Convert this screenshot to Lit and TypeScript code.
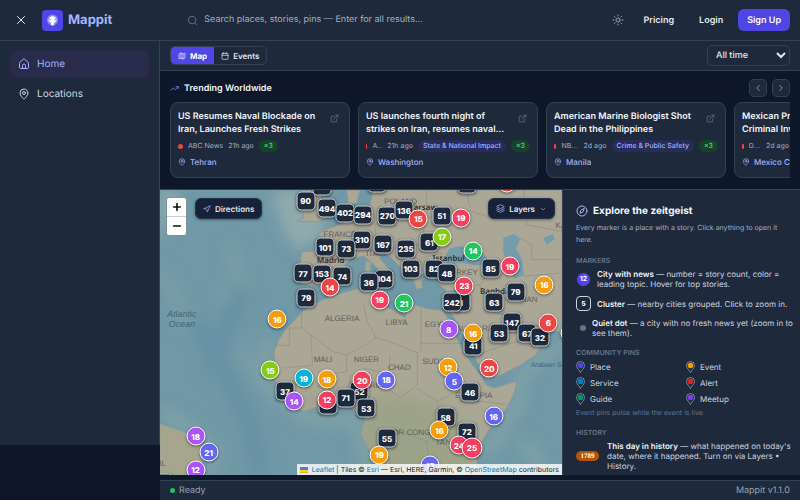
import { LitElement, html, css, svg, nothing } from "lit";
import { customElement, property } from "lit/decorators.js";

const icon = (body: unknown, size = 12, width = 2) => html`<svg
  class="icon" width=${size} height=${size} viewBox="0 0 24 24" fill="none" stroke="currentColor"
  stroke-width=${width} stroke-linecap="round" stroke-linejoin="round" aria-hidden="true">${body}</svg>`;

const paths = {
  close: svg`<path d="M19 5 5 19M5 5l14 14"/>`,
  search: svg`<circle cx="11" cy="11" r="8"/><path d="m21 21-4.3-4.3"/>`,
  sun: svg`<circle cx="12" cy="12" r="4"/><path d="M12 2v2M12 20v2M4.93 4.93l1.41 1.41M17.66 17.66l1.41 1.41M2 12h2M20 12h2M6.34 17.66l-1.41 1.41M19.07 4.93l-1.41 1.41"/>`,
  home: svg`<path d="M15 21v-6a3 3 0 0 0-6 0v6"/><path d="M3 10a2 2 0 0 1 .7-1.5l7-6a2 2 0 0 1 2.6 0l7 6A2 2 0 0 1 21 10v9a2 2 0 0 1-2 2H5a2 2 0 0 1-2-2z"/>`,
  pin: svg`<path d="M20 10c0 5-5.5 10.200-7.400 11.800a1 1 0 0 1-1.200 0C9.500 20.200 4 15 4 10a8 8 0 0 1 16 0"/><circle cx="12" cy="10" r="3"/>`,
  map: svg`<path d="M14.100 5.550a2 2 0 0 0 1.800 0l3.650-1.830A1 1 0 0 1 21 4.620v12.760a1 1 0 0 1-.55.9l-4.550 2.270a2 2 0 0 1-1.800 0l-4.200-2.100a2 2 0 0 0-1.800 0l-3.650 1.830A1 1 0 0 1 3 19.380V6.620a1 1 0 0 1 .55-.9L8.100 3.450a2 2 0 0 1 1.800 0zM15 5.760v15M9 3.240v15"/>`,
  calendar: svg`<path d="M8 2v4M16 2v4M3 10h18"/><rect x="3" y="4" width="18" height="18" rx="2"/>`,
  trend: svg`<path d="M22 7l-8.500 8.500-5-5L2 17"/><path d="M16 7h6v6"/>`,
  left: svg`<path d="m15 18-6-6 6-6"/>`,
  right: svg`<path d="m9 18 6-6-6-6"/>`,
  down: svg`<path d="m6 9 6 6 6-6"/>`,
  external: svg`<path d="M15 3h6v6M10 14 21 3M18 13v6a2 2 0 0 1-2 2H5a2 2 0 0 1-2-2V8a2 2 0 0 1 2-2h6"/>`,
  nav: svg`<path d="m3 11 19-9-9 19-2-8z"/>`,
  layers: svg`<path d="M12.800 2.200a2 2 0 0 0-1.660 0L2.600 6.080a1 1 0 0 0 0 1.830l8.580 3.910a2 2 0 0 0 1.660 0l8.580-3.900a1 1 0 0 0 0-1.830z"/><path d="M2 12a1 1 0 0 0 .6.900l8.600 3.900a2 2 0 0 0 1.650 0l8.580-3.900A1 1 0 0 0 22 12"/><path d="M2 17a1 1 0 0 0 .6.900l8.600 3.900a2 2 0 0 0 1.650 0l8.580-3.900A1 1 0 0 0 22 17"/>`,
  compass: svg`<circle cx="12" cy="12" r="10"/><path d="m16.200 7.800-1.800 5.400a2 2 0 0 1-1.300 1.300l-5.300 1.700 1.800-5.400a2 2 0 0 1 1.300-1.300z"/>`,
  plus: svg`<path d="M12 4v16M4 12h16"/>`,
  minus: svg`<path d="M4 12h16"/>`,
};

const shared = css`
  :host { font-family: Inter, "Noto Sans", sans-serif; text-rendering: geometricPrecision; }
  * { box-sizing: border-box; }
  .icon { display: block; flex: none; }
  button { font: inherit; color: inherit; border: 0; padding: 0; margin: 0; background: none; cursor: pointer; text-rendering: inherit; }
  h1, h2, h3, p, ul { margin: 0; padding: 0; }
  ul { list-style: none; }
  a { color: inherit; text-decoration: none; }
`;

type Story = { title: string; source: string; age: string; topic?: string; place: string };

const stories: Story[] = [
  { title: "US Resumes Naval Blockade on Iran, Launches Fresh Strikes", source: "ABC News", age: "21h ago", place: "Tehran" },
  { title: "US launches fourth night of strikes on Iran, resumes naval blockade of ports", source: "Al Jazeera", age: "21h ago", topic: "State & National Impact", place: "Washington" },
  { title: "American Marine Biologist Shot Dead in the Philippines", source: "NBC News", age: "2d ago", topic: "Crime & Public Safety", place: "Manila" },
  { title: "Mexican President Opens Criminal Investigation", source: "DW News", age: "2d ago", topic: "State & National Impact", place: "Mexico City" },
];

@customElement("story-card")
class StoryCard extends LitElement {
  @property({ attribute: false }) story!: Story;
  static styles = [shared, css`
    :host { display: block; }
    .card { height: 76px; padding: 7px; border: 1px solid #334155; border-radius: 8px; background: #1e293b; }
    .head { display: flex; justify-content: space-between; gap: 4px; }
    h3 { width: 142px; height: 26px; overflow: hidden; font-size: 9px; line-height: 13px; font-weight: 600; color: #f1f5f9;
      display: -webkit-box; -webkit-line-clamp: 2; -webkit-box-orient: vertical; }
    .open { height: 16px; padding: 4px 3px 0 0; color: #64748b; }
    .meta { display: flex; align-items: center; gap: 5px; height: 12px; margin-top: 4px; font-size: 7px; line-height: 12px; color: #a3b0c2; white-space: nowrap; }
    .dot { height: 5px; min-width: 1px; flex: 0 1 5px; border-radius: 3px; background: #ef4444; }
    .source { flex: 0 1 auto; min-width: 8px; overflow: hidden; text-overflow: ellipsis; }
    .topic, .count { flex: none; padding: 0 5px; border-radius: 6px; font-weight: 500; }
    .topic { color: #a5b4fc; background: #292b5b; }
    .count { color: #4ade80; background: #14432a; }
    .place { display: flex; align-items: center; gap: 4px; height: 12px; margin-top: 4px; font-size: 8px; line-height: 12px; font-weight: 500; color: #a5b4fc; }
  `];
  render() {
    const s = this.story;
    return html`<article class="card">
      <div class="head"><h3>${s.title}</h3><a class="open" href="#" aria-label="Open story">${icon(paths.external, 9)}</a></div>
      <div class="meta"><span class="dot"></span><span class="source">${s.source}</span><span>${s.age}</span>
        ${s.topic ? html`<span class="topic">${s.topic}</span>` : nothing}<span class="count">×3</span></div>
      <a class="place" href="#">${icon(paths.pin, 8)}${s.place}</a>
    </article>`;
  }
}

const C = { red: "#ef4444", rose: "#f43f5e", lime: "#84cc16", green: "#22c55e", amber: "#f59e0b", purple: "#a855f7", indigo: "#6366f1", cyan: "#06b6d4" };
type Marker = [number, number, string, string?, boolean?];

/* Ordered back to front. A colour makes a city circle; none makes a cluster. */
const markers: Marker[] = [
  [485, -5, ""], [650, -14, ""], [921, -12, ""], [1040, -14, "", C.red],
  [437, 38, "90"], [501, 61, "494"], [555, 75, "402"], [609, 81, "294"], [682, 84, "270"], [732, 66, "136"],
  [775, 92, "15", C.red], [845, 83, "51"], [903, 90, "19", C.rose], [606, 156, "310"], [669, 169, "167"],
  [495, 178, "101"], [559, 182, "73"], [738, 182, "235"], [808, 163, "61"], [846, 147, "17", C.lime],
  [940, 189, "14", C.green], [752, 242, "103"], [822, 242, "82"], [861, 256, "48"], [992, 240, "85"],
  [1050, 235, "19", C.rose], [429, 256, "77"], [486, 257, "153"], [547, 265, "74"], [672, 272, "104"],
  [626, 283, "36"], [510, 298, "14", C.red], [439, 330, "79"], [659, 335, "19", C.rose], [732, 345, "21", C.green],
  [904, 342, "1"], [876, 342, "242"], [913, 293, "23", C.rose], [1067, 311, "79"], [1003, 342, "63"],
  [1153, 291, "16", C.amber], [352, 394, "16", C.amber], [866, 424, "8", C.purple], [940, 473, "41"],
  [939, 436, "16", C.amber], [1056, 403, "147"], [1017, 436, "53"], [1101, 436, "67"], [1140, 448, "32"],
  [1165, 404, "6", C.red], [1231, 435, "", C.amber], [331, 547, "15", C.lime], [431, 571, "19", C.cyan],
  [501, 574, "18", C.amber], [598, 609, "52"], [607, 576, "20", C.rose], [679, 575, "18", C.indigo],
  [375, 609, "37"], [403, 639, "14", C.purple], [503, 650, ""], [501, 636, "12", C.rose], [557, 629, "71"],
  [619, 661, "53"], [864, 538, "12", C.amber], [883, 579, "5", C.indigo], [988, 540, "20", C.red],
  [930, 612, "46"], [1001, 684, "16", C.indigo], [857, 688, "58"], [838, 727, "16", C.amber], [921, 732, "72"],
  [897, 772, "24", C.rose], [936, 779, "25", C.rose, true], [681, 751, "55"], [658, 800, "19", C.amber],
  [810, 832, "17", C.indigo], [107, 745, "18", C.purple], [146, 793, "21", C.indigo], [107, 845, "12", C.purple], [12, 884, ""],
];

const labels: [number, number, string, string][] = [
  [65, 378, "Atlantic", "sea"], [65, 409, "Ocean", "sea"], [1170, 535, "Arabian Sea", "sea small"],
  [540, 141, "FRANCE", ""], [722, 41, "POLAND", ""], [650, 199, "ITALY", ""], [905, 254, "TURKEY", ""],
  [546, 394, "ALGERIA", ""], [710, 406, "LIBYA", ""], [835, 412, "EGYPT", ""], [955, 422, "SAUDI ARABIA", ""],
  [1104, 337, "IRAN", ""], [489, 517, "MALI", ""], [619, 517, "NIGER", ""], [718, 540, "CHAD", ""],
  [829, 523, "SUDAN", ""], [620, 594, "NIGERIA", ""], [941, 625, "ETHIOPIA", ""], [764, 736, "DR CONGO", ""],
  [885, 766, "TANZANIA", ""], [8, 827, "IL", ""], [1210, 113, "KAZ", ""],
  [512, 220, "Madrid", "city"], [866, 213, "Istanbul", "city"], [1012, 313, "Baghdad", "city"], [785, 60, "Warsaw", "city"],
];

@customElement("world-map")
class WorldMap extends LitElement {
  static styles = [shared, css`
    :host { display: block; position: relative; overflow: hidden; background: #7098a6; }
    .terrain { position: absolute; inset: 0; width: 100%; height: 100%; }
    .at { position: absolute; transform: translate(-50%, -50%); white-space: nowrap; }
    .label { font-size: 8px; line-height: 10px; color: #5f615e; font-family: "Liberation Sans", Arial, sans-serif; }
    .sea { font-style: italic; color: #3f667d; font-size: 9px; }
    .small { font-size: 7px; }
    .city { color: #2b2e33; font-family: "Noto Sans", sans-serif; font-weight: 600; }
    .marker { display: grid; place-items: center; width: 19px; height: 19px; color: #fff; font-size: 8px; font-weight: 800;
      border: 1px solid #cbd5e1; border-radius: 5px; background: #1e293b; box-shadow: 0 1px 3px #0007; }
    .marker.round { border: 1px solid #fff; border-radius: 50%; }
    .marker.big { width: 21px; height: 21px; }
    .zoom { position: absolute; left: 6px; top: 7px; display: grid; border: 1px solid #7b929c; border-radius: 3px; background: #fff; overflow: hidden; }
    .zoom button { width: 19px; height: 18px; color: #111; display: grid; place-items: center; }
    .zoom button + button { height: 19px; border-top: 1px solid #ccc; }
    .pill { position: absolute; top: 8px; display: flex; align-items: center; gap: 4px; height: 21px; padding: 0 7px;
      border-radius: 6px; background: #17223a; border: 1px solid #26344d; color: #e2e8f0; font-size: 8px; font-weight: 600; box-shadow: 0 1px 3px #0006; }
    .pill .icon { color: #a5b4fc; }
    .pill .icon:nth-of-type(2) { color: #94a3b8; }
    .directions { left: 35px; }
    .layers { right: 7px; }
    .credit { position: absolute; right: 0; bottom: 0; display: flex; align-items: center; gap: 4px; height: 11px; padding: 0 3px;
      background: #ffffffcc; color: #222; font-size: 7px; white-space: nowrap; }
    .credit a { color: #0078a8; }
  `];
  render() {
    const at = (x: number, y: number) => `left:${((x / 1206) * 100).toFixed(2)}%;top:${(((y - 6) / 855) * 100).toFixed(2)}%`;
    return html`
      <svg class="terrain" viewBox="0 6 1206 855" preserveAspectRatio="none" aria-hidden="true">
        <defs>
          <filter id="soft" x="-30%" y="-30%" width="160%" height="160%"><feGaussianBlur stdDeviation="20"/></filter>
          <clipPath id="africa"><path d="M490 335L455 352 430 368 400 400 373 430 355 458 342 492 345 520 334 545 345 582 372 620 402 652 432 670 470 658 512 652 550 646 578 662 604 680 618 692 608 718 604 742 630 788 650 820 655 861H960L948 810 962 765 1000 705 1040 660 1064 612 1070 580 1048 586 1002 600 978 590 960 560 930 520 905 480 880 430 860 385 850 367 800 362 765 350 740 365 735 388 690 362 655 345 640 302 600 300 545 315Z"/></clipPath>
        </defs>
        <rect y="6" width="1206" height="855" fill="#7098a6"/>
        <g filter="url(#soft)" fill="none">
          <path d="M60 6Q30 100 0 170V6ZM330 6L470 6 500 140 410 190 370 130Z" fill="#8faaae"/>
          <path d="M220 170Q210 230 240 270T170 330M240 480Q290 560 370 640M0 250Q60 330 70 420" stroke="#7c9fa8" stroke-width="34"/>
          <path d="M100 400Q180 520 230 620T300 861M250 300Q170 480 150 560" stroke="#6892a5" stroke-width="60"/>
          <path d="M0 670L90 720 160 790 150 861M320 450V590L430 690 590 700 630 861M980 800L1080 640 1080 570 1206 460M1090 760L1160 861" stroke="#86a5a8" stroke-width="28"/>
        </g>
        <path fill="#aaa796" stroke="#8b9b94" stroke-width="3" d="M425 192L470 188 518 196 506 152 470 140 505 122 545 108 590 82 625 70 640 6H1206V430L1150 432 1110 420 1075 405 1048 378 1036 388 1062 425 1100 447 1146 466 1128 500 1080 532 1020 562 978 574 955 530 930 474 892 405 870 370 866 355 902 340 910 303 862 312 830 282 846 258 810 246 782 262 788 300 770 304 758 270 722 240 690 205 664 192 660 212 700 258 682 276 640 228 612 204 572 212 545 240 525 280 470 294 425 288 420 240ZM410 100L432 90 425 50 440 6H480L500 90 470 102ZM560 6L600 6 590 45 565 50Z"/>
        <path fill="#aaa796" stroke="#8b9b94" stroke-width="3" d="M490 335L455 352 430 368 400 400 373 430 355 458 342 492 345 520 334 545 345 582 372 620 402 652 432 670 470 658 512 652 550 646 578 662 604 680 618 692 608 718 604 742 630 788 650 820 655 861H960L948 810 962 765 1000 705 1040 660 1064 612 1070 580 1048 586 1002 600 978 590 960 560 930 520 905 480 880 430 860 385 850 367 800 362 765 350 740 365 735 388 690 362 655 345 640 302 600 300 545 315Z"/>
        <g clip-path="url(#africa)"><path filter="url(#soft)" fill="#9ca388" d="M340 625L580 630 720 620 860 660 920 710 930 861H590L600 690Z"/></g>
        <path fill="#a5a68d" stroke="#8fa399" stroke-width="3" d="M0 708L40 722 80 735 126 775 150 790 120 830 90 861H0ZM618 218l14 5-3 30-13-5ZM848 318l20-5-6 12Z"/>
        <path fill="#749dab" d="M852 210L870 180 905 174 940 186 975 202 995 226 950 232 900 224 862 232ZM1030 150L1062 138 1082 152 1068 182 1086 214 1092 262 1064 272 1044 232 1030 194ZM1150 150l28-12 6 16-24 16Z"/>
        <path fill="none" stroke="#858377" stroke-width="2" opacity=".7" d="M425 372V420H388V472H342M425 420L452 440 520 492 560 500 610 475 648 450 622 400 610 345M452 440L458 532 370 540M560 500V550L510 560 470 600M648 450L685 460 772 494V590L720 630 685 600 690 500M783 362V488L772 494M783 466H920M610 540L690 558M770 600L830 640 905 605 905 560M830 640L850 710 800 760 720 730 670 740M900 640L960 640 1040 650M850 710L950 720M520 600V650M570 560V650M480 295L500 335M540 200L580 212M640 70L650 160 700 180 780 170 800 90 900 60 1000 90 1130 70M800 90V6M930 60L920 6M850 195L780 210M890 300L960 290 1000 230M960 290L985 370 1050 385M1115 215H1206M1115 215V170L1080 150M1090 265L1200 255M1206 130L1100 110 1090 6M950 500L1040 470 1100 450M670 740L700 861M800 760L810 861"/>
      </svg>
      ${labels.map(([x, y, t, k]) => html`<span class="at label ${k}" style=${at(x, y)}>${t}</span>`)}
      ${markers.map(([x, y, t, c, big]) => html`<span class="at marker ${c ? "round" : ""} ${big ? "big" : ""}"
        style="${at(x, y)}${c ? `;background:${c}` : ""}">${t}</span>`)}
      <div class="zoom"><button aria-label="Zoom in">${icon(paths.plus, 10, 4)}</button><button aria-label="Zoom out">${icon(paths.minus, 10, 4)}</button></div>
      <button class="pill directions">${icon(paths.nav, 8)}Directions</button>
      <button class="pill layers">${icon(paths.layers, 9)}Layers ${icon(paths.down, 8)}</button>
      <div class="credit"><svg width="8" height="6" aria-hidden="true"><path fill="#4c7be1" d="M0 0h8v3H0z"/><path fill="#ffd500" d="M0 3h8v2H0z"/><path fill="#e0bc00" d="M0 5h8v1H0z"/></svg>
        <span><a href="#">Leaflet</a> | Tiles © <a href="#">Esri</a> — Esri, HERE, Garmin, © <a href="#">OpenStreetMap</a> contributors</span></div>`;
  }
}

const pins: [string, string][] = [["Place", "#4f46e5"], ["Event", "#f59e0b"], ["Service", "#0284c7"], ["Alert", "#dc2626"], ["Guide", "#059669"], ["Meetup", "#7c3aed"]];

@customElement("map-guide")
class MapGuide extends LitElement {
  static styles = [shared, css`
    :host { display: block; overflow: hidden; background: #1e293b; border-left: 1px solid #334155; color: #cbd5e1; font-size: 8px; line-height: 10px; }
    .guide { padding: 13px 4px 3px 13px; }
    h2 { display: flex; align-items: center; gap: 5px; height: 15px; font-size: 10px; font-weight: 700; color: #f1f5f9; }
    h2 .icon { color: #a5b4fc; }
    .intro { margin-top: 4px; padding-right: 16px; font-size: 7px; line-height: 12px; color: #a3b0c2; }
    h3 { margin: 10px 0 3px; font-size: 7px; line-height: 10px; font-weight: 600; color: #64748b; text-transform: uppercase; }
    b { font-weight: 600; color: #f1f5f9; }
    .rows { display: grid; gap: 7px; }
    .row { display: flex; align-items: center; gap: 6px; }
    .badge { flex: none; display: grid; place-items: center; width: 15px; height: 15px; font-size: 7px; font-weight: 700; color: #fff; }
    .city { border: 1px solid #1e293b; border-radius: 50%; background: #4f46e5; }
    .cluster { border: 1px solid #cbd5e1; border-radius: 4px; }
    .dot { flex: none; width: 6px; height: 6px; margin: 0 2px 0 4px; border-radius: 50%; background: #6b7280; }
    .dotrow { gap: 4px; }
    .pins { display: grid; grid-template-columns: 1fr 1fr; row-gap: 4px; }
    .pins li { display: flex; align-items: center; gap: 5px; height: 12px; }
    .note { margin-top: 3px; font-size: 7px; color: #64748b; }
    .year { flex: none; width: 23px; height: 10px; border-radius: 5px; background: #b45309; color: #fff; font: 700 7px/10px "Liberation Serif", serif; text-align: center; }
    .history { gap: 8px; }
  `];
  render() {
    return html`<section class="guide">
      <h2>${icon(paths.compass, 12)}Explore the zeitgeist</h2>
      <p class="intro">Every marker is a place with a story. Click anything to open it here.</p>
      <h3>Markers</h3>
      <div class="rows">
        <div class="row"><span class="badge city">12</span><p><b>City with news</b> — number = story count, color = leading topic. Hover for top stories.</p></div>
        <div class="row"><span class="badge cluster">5</span><p><b>Cluster</b> — nearby cities grouped. Click to zoom in.</p></div>
        <div class="row dotrow"><span class="dot"></span><p><b>Quiet dot</b> — a city with no fresh news yet (zoom in to see them).</p></div>
      </div>
      <h3>Community pins</h3>
      <ul class="pins">${pins.map(([n, c]) => html`<li><svg width="9" height="12" viewBox="0 0 18 24" aria-hidden="true">
        <path d="M9 23C7 18 1 15 1 9a8 8 0 0 1 16 0c0 6-6 9-8 14z" fill="#1e293b" stroke="#94a3b8" stroke-width="1.500"/><circle cx="9" cy="9" r="5.500" fill=${c}/></svg>${n}</li>`)}</ul>
      <p class="note">Event pins pulse while the event is live.</p>
      <h3>History</h3>
      <div class="row history"><span class="year">1789</span><p><b>This day in history</b> — what happened on today's date, where it happened. Turn on via Layers • History.</p></div>
    </section>`;
  }
}

@customElement("app-root")
class AppRoot extends LitElement {
  static styles = [shared, css`
    :host { display: flex; flex-direction: column; height: 100vh; overflow: hidden; background: #0f172a; color: #e2e8f0; }
    .top { display: flex; align-items: center; height: 41px; flex: none; padding: 0 10px 0 15px; background: #1e293b; border-bottom: 1px solid #334155; font-size: 9px; font-weight: 600; }
    .brand { display: flex; align-items: center; gap: 5px; margin-left: 15px; font-size: 13px; font-weight: 700; color: #a5b4fc; }
    .logo { display: block; }
    .search { flex: 1; display: flex; align-items: center; gap: 6px; margin: 0 16px 0 75px; color: #64748b; }
    .search input { flex: 1; min-width: 0; border: 0; outline: 0; padding: 0; background: none; font: 400 9px/16px Inter, sans-serif; color: #e2e8f0; text-rendering: inherit; }
    .search input::placeholder { color: #a3b0c2; opacity: 1; }
    .links { display: flex; align-items: center; }
    .theme { color: #94a3b8; margin-right: 20px; }
    .login { margin: 0 15px 0 25px; }
    .signup { height: 22px; padding: 0 9px; border-radius: 6px; background: #4f46e5; color: #fff; }
    .body { display: flex; flex: 1; min-height: 0; }
    .side { width: 160px; flex: none; margin-bottom: 55px; padding: 9px 10px; background: #1e293b; border-right: 1px solid #334155; }
    .side a { display: flex; align-items: center; gap: 7px; height: 28px; padding: 0 8px; margin-bottom: 2px; border-radius: 6px; font-size: 10px; color: #cbd5e1; }
    .side a.on { background: #282b4b; color: #a5b4fc; }
    .main { flex: 1; min-width: 0; display: flex; flex-direction: column; }
    .bar { display: flex; align-items: center; justify-content: space-between; flex: none; height: 30px; padding: 0 10px; background: #1e293b; border-bottom: 1px solid #334155; }
    .tabs { display: flex; border: 1px solid #334155; border-radius: 5px; overflow: hidden; }
    .tabs button { display: flex; align-items: center; gap: 4px; height: 17px; padding: 0 7px; font-size: 8px; font-weight: 600; }
    .tabs .on { background: #4f46e5; color: #fff; font-weight: 700; }
    select { width: 83px; height: 21px; padding: 0 4px; border: 1px solid #334155; border-radius: 5px; background: #1e293b; color: #e2e8f0; font: 500 9px Inter, sans-serif; text-rendering: inherit; }
    .trend { flex: none; height: 119px; padding: 8px 10px 0; border-bottom: 1px solid #334155; }
    .thead { display: flex; align-items: center; gap: 5px; height: 18px; margin-bottom: 5px; }
    .thead .icon { color: #818cf8; }
    .thead h2 { flex: 1; font-size: 9px; font-weight: 600; color: #f1f5f9; }
    .arrow { display: grid; place-items: center; width: 18px; height: 18px; border: 1px solid #334155; border-radius: 5px; background: #1e293b; }
    .thead .arrow .icon { color: #94a3b8; }
    .cards { display: flex; gap: 8px; overflow: hidden; }
    .cards story-card { flex: 0 0 180px; min-width: 0; }
    .explore { flex: 1; min-height: 0; display: flex; margin-bottom: 5px; }
    world-map { flex: 1; min-width: 0; }
    map-guide { width: 238px; flex: none; }
    .status { display: flex; align-items: center; gap: 4px; flex: none; height: 20px; padding: 0 10px; background: #1e293b; border-top: 1px solid #334155; font-size: 9px; color: #94a3b8; }
    .status i { width: 5px; height: 5px; border-radius: 50%; background: #22c55e; }
    .status span:last-child { margin-left: auto; }
  `];
  render() {
    return html`
      <header class="top">
        <button aria-label="Close menu">${icon(paths.close, 12)}</button>
        <a class="brand" href="#"><svg class="logo" width="21" height="21" viewBox="0 0 42 42" aria-hidden="true"><rect width="42" height="42" rx="8" fill="#4f46e5"/>
          <circle cx="21" cy="20" r="11" fill="#8d89f0"/><path fill="#fff" d="M15 15q6-5 12 0c4 4 1 9-3 11l-1 5h-4l-1-5c-4-2-7-7-3-11z"/><path d="M13 17l3 1v3M29 17l-3 1v3" stroke="#6f69ea" stroke-width="1.500" fill="none"/></svg>Mappit</a>
        <label class="search">${icon(paths.search, 11)}<input type="search" aria-label="Search" placeholder="Search places, stories, pins — Enter for all results..."></label>
        <nav class="links"><button class="theme" aria-label="Theme">${icon(paths.sun, 12)}</button><a href="#">Pricing</a><a class="login" href="#">Login</a><button class="signup">Sign Up</button></nav>
      </header>
      <div class="body">
        <nav class="side"><a class="on" href="#">${icon(paths.home, 12)}Home</a><a href="#">${icon(paths.pin, 12)}Locations</a></nav>
        <main class="main">
          <div class="bar"><div class="tabs"><button class="on">${icon(paths.map, 8)}Map</button><button>${icon(paths.calendar, 8)}Events</button></div>
            <select aria-label="Time range"><option>All time</option></select></div>
          <section class="trend">
            <div class="thead">${icon(paths.trend, 9)}<h2>Trending Worldwide</h2><button class="arrow" aria-label="Previous">${icon(paths.left, 10)}</button><button class="arrow" aria-label="Next">${icon(paths.right, 10)}</button></div>
            <div class="cards">${stories.map((s) => html`<story-card .story=${s}></story-card>`)}</div>
          </section>
          <div class="explore"><world-map></world-map><map-guide></map-guide></div>
          <footer class="status"><i></i><span>Ready</span><span>Mappit v1.1.0</span></footer>
        </main>
      </div>`;
  }
}
